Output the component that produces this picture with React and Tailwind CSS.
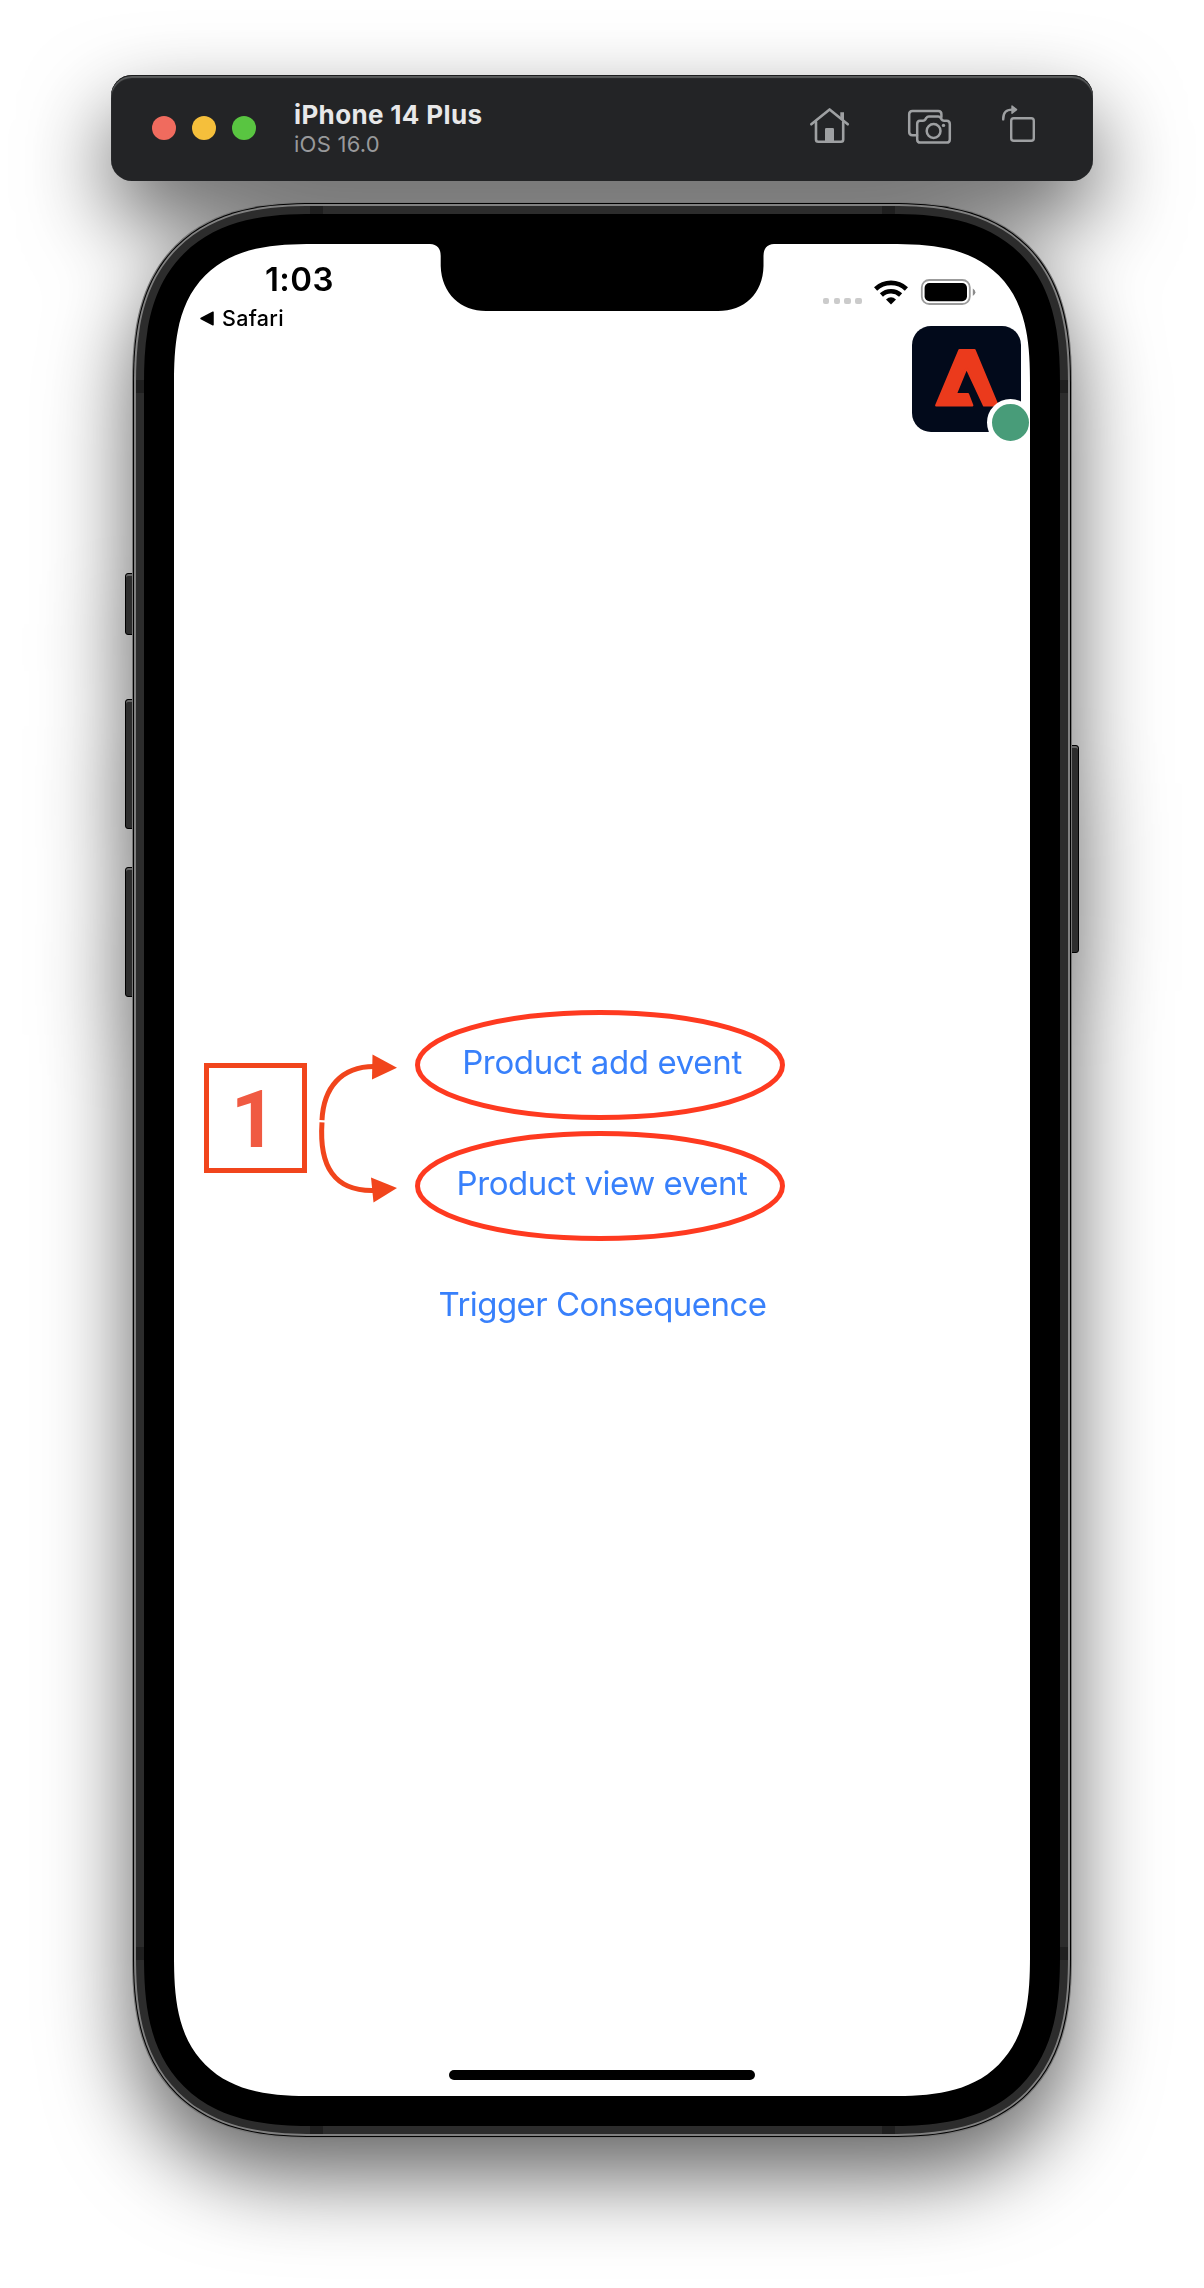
import React from "react";

function HomeIcon() {
  return (
    <svg className="mt-[30px] mr-[55px]" width="42" height="40" viewBox="809 105 42 40" fill="none" stroke="#9ea0a2" strokeWidth="2.6" strokeLinecap="round" strokeLinejoin="round">
      <path d="M811.3 124.3 L829.6 109.4 L847.8 124.3" />
      <path d="M816 122 V139.5 Q816 141.8 818.3 141.8 H841 Q843.2 141.8 843.2 139.5 V122" />
      <path d="M840.3 112.2 H844 V121 L840.3 118 Z" fill="#9ea0a2" stroke="none" />
      <path d="M825 129.3 Q825 128 826.3 128 H832.7 Q834 128 834 129.3 V142 H825 Z" fill="#9ea0a2" stroke="none" />
    </svg>
  );
}

function ScreenshotIcon() {
  return (
    <svg className="mt-[33px] mr-[48px]" width="46" height="38" viewBox="906 108 46 38" fill="none" stroke="#9ea0a2" strokeWidth="2.5" strokeLinecap="round" strokeLinejoin="round">
      <path d="M917 135.2 H912.5 Q909.2 135.2 909.2 132 V114.3 Q909.2 111 912.5 111 H938.3 Q941.4 111 941.4 114.3 V117" />
      <path d="M920 120.7 H923 Q924.6 120.7 925.3 119.5 L926.4 117.8 Q927.2 116.5 928.8 116.5 H938.2 Q939.8 116.5 940.6 117.8 L941.7 119.5 Q942.4 120.7 944 120.7 H946.6 Q949.8 120.7 949.8 124 V139.4 Q949.8 142.6 946.6 142.6 H920.4 Q917.2 142.6 917.2 139.4 V124 Q917.2 120.7 920 120.7 Z" />
      <circle cx="933.6" cy="131" r="6.9" />
      <circle cx="943.5" cy="125.4" r="1.7" fill="#9ea0a2" stroke="none" />
    </svg>
  );
}

function RotateIcon() {
  return (
    <svg className="mt-[28px]" width="36" height="42" viewBox="1000 103 36 42" fill="none" stroke="#9ea0a2" strokeWidth="2.4" strokeLinecap="round" strokeLinejoin="round">
      <rect x="1011.2" y="118.2" width="22.6" height="22.6" rx="2.6" />
      <path d="M1003.2 119.4 Q1003 109.6 1012 109.6" />
      <path d="M1012 106 L1016.6 109.6 L1012 113.2 Z" fill="#9ea0a2" strokeWidth="1.4" />
    </svg>
  );
}

function Toolbar() {
  return (
    <header className="relative flex h-[106px] w-[982px] items-center rounded-[21px] bg-[#232426] pl-[41px] shadow-[inset_0_1px_0_#1b1c1d,inset_0_3px_1px_#5a5c5d]">
      <div className="flex gap-4">
        <span className="size-6 rounded-full bg-[#f06b5e]" />
        <span className="size-6 rounded-full bg-[#f5bf3b]" />
        <span className="size-6 rounded-full bg-[#59c541]" />
      </div>
      <div className="ml-[38px] flex w-[300px] flex-col pb-px">
        <span className="h-[30px] text-[26px] leading-[30px] font-bold tracking-[0.35px] whitespace-nowrap text-[#e8e8e9]">iPhone 14 Plus</span>
        <span className="h-[26px] text-[22px] leading-[28px] tracking-[0.25px] whitespace-nowrap text-[#98999b]">iOS 16.0</span>
      </div>
      <div className="ml-auto flex items-start self-stretch pr-[57px]">
        <HomeIcon />
        <ScreenshotIcon />
        <RotateIcon />
      </div>
    </header>
  );
}

function Key({ className }) {
  return <span className={"absolute w-[12px] border border-black bg-[#2d2d2d] " + className} />;
}

function Notch() {
  return (
    <svg className="absolute top-0 left-[253px]" width="350" height="68" viewBox="0 0 350 68">
      <path d="M0 -1 V0 H3 Q13.7 0.5 13.7 12 V22 C14.5 50 34 67 59 67 H291 C317 67 336 50 336.5 22 V12 Q336.5 0.5 347 0 H350 V-1 Z" fill="#000" />
    </svg>
  );
}

function WifiIcon() {
  return (
    <svg width="34" height="25" viewBox="874 280 34 25" fill="none" stroke="#000" strokeWidth="4.6">
      <path d="M875.6 289 A22.5 22.5 0 0 1 906.4 289" />
      <path d="M881.4 295 A14.2 14.2 0 0 1 900.6 295" />
      <path d="M891 304.6 L886 299.5 Q891 295.2 896 299.5 Z" fill="#000" stroke="none" />
    </svg>
  );
}

function BatteryIcon() {
  return (
    <svg width="56" height="27" viewBox="920 279 56 27">
      <rect x="921.8" y="280" width="48" height="24" rx="7.5" fill="none" stroke="#9b9b9b" strokeWidth="1.8" />
      <rect x="924.6" y="283" width="42.4" height="18.2" rx="4.8" fill="#000" />
      <path d="M972.8 288.5 Q975.4 290 975.4 292.3 Q975.4 294.7 972.8 296 Z" fill="#8b8b8b" />
    </svg>
  );
}

function StatusBar() {
  return (
    <div className="flex h-[82px] justify-between pr-[54px] pl-[26px]">
      <div className="flex flex-col">
        <span className="mt-[14px] h-[42px] pl-[65px] text-[33px] leading-[42px] font-semibold tracking-[0.4px]">1:03</span>
        <span className="mt-[4px] flex h-[28px] items-center text-[21.5px] leading-[28px] font-medium tracking-[0.3px]">
          <svg className="mr-[8px]" width="14" height="15" viewBox="0 0 14 15">
            <path d="M1 7.5 L13 1.2 V13.8 Z" fill="#000" stroke="#000" strokeLinejoin="round" strokeWidth="1.5" />
          </svg>
          Safari
        </span>
      </div>
      <div className="mt-[35px] flex h-[27px] items-center">
        <div className="mt-[17px] mr-[12.5px] flex gap-[4.2px]">
          <span className="size-[6.5px] rounded-[2px] bg-[#cbcbcb]" />
          <span className="size-[6.5px] rounded-[2px] bg-[#cbcbcb]" />
          <span className="size-[6.5px] rounded-[2px] bg-[#cbcbcb]" />
          <span className="size-[6.5px] rounded-[2px] bg-[#cbcbcb]" />
        </div>
        <WifiIcon />
        <span className="w-[12px]" />
        <BatteryIcon />
      </div>
    </div>
  );
}

function AppBadge() {
  return (
    <div className="relative mr-[9.5px] h-[106px] w-[109px] self-end rounded-[19px] bg-[#020a1b]">
      <svg className="absolute top-[21px] left-[21px]" width="68" height="62" viewBox="933 347 68 62">
        <path d="M959.5 350 H974.5 L997.6 405.5 H984 L966.5 368 L955.8 394.2 H968 L972.3 405.5 H936.2 Z" fill="#eb3a1c" stroke="#eb3a1c" strokeWidth="2.2" strokeLinejoin="round" />
      </svg>
      <span className="absolute top-[73px] left-[75.5px] size-[47px] rounded-full border-[5.5px] border-white bg-[#489c79]" />
    </div>
  );
}

function Callout() {
  return (
    <>
      <div className="absolute top-[819px] left-[30px] flex h-[110px] w-[102.5px] items-center justify-center border-5 border-[#f1451c] pr-[3px] pt-[4px] font-['Roboto'] text-[80px] leading-none font-bold text-[#f05a42]">
        1
      </div>
      <svg className="absolute top-[806px] left-[136px]" width="94" height="160" viewBox="310 1050 94 160" fill="none" stroke="#f1451c" strokeWidth="5">
        <path d="M322 1120.2 C323.5 1088 341 1066.5 374 1066.5" />
        <path d="M322 1122.3 C319 1166 334 1191.5 374 1190.5" />
        <path d="M372.5 1054.5 L397 1067.8 L372 1079.5 Z" fill="#f1451c" stroke="none" />
        <path d="M371 1177.5 L397 1188 L373.5 1202.5 Z" fill="#f1451c" stroke="none" />
      </svg>
    </>
  );
}

function LinkButton({ children, circled, className }) {
  return (
    <button className={"relative flex h-[110px] w-[370px] items-center justify-center pb-[5px] text-[33px] leading-none whitespace-nowrap text-[#3880fb] " + className}>
      {circled && (
        <svg className="absolute inset-y-0 left-[-2px]" width="370" height="110" fill="none" stroke="#fe3a20" strokeWidth="5">
          <ellipse cx="185" cy="55" rx="182.5" ry="52.5" />
        </svg>
      )}
      {children}
    </button>
  );
}

function Screen() {
  return (
    <div className="relative flex h-[1852px] w-[856px] flex-col overflow-hidden rounded-[140px] bg-white text-black [corner-shape:superellipse(1.45)]">
      <Notch />
      <StatusBar />
      <AppBadge />
      <div className="mt-[578px] flex flex-col items-center gap-[11px]">
        <LinkButton circled className="tracking-[-0.35px]">Product add event</LinkButton>
        <LinkButton circled className="tracking-[-0.45px]">Product view event</LinkButton>
        <LinkButton className="pl-px tracking-[-0.55px]">Trigger Consequence</LinkButton>
      </div>
      <Callout />
      <div className="mt-auto mb-4 h-[10px] w-[306px] self-center rounded-full bg-black" />
    </div>
  );
}

function Phone() {
  return (
    <div className="relative mt-[22px]">
      <Key className="top-[370px] -left-[8px] h-[62px] rounded-l-[3px] shadow-[inset_0_2px_0_#666]" />
      <Key className="top-[496px] -left-[8px] h-[130px] rounded-l-[3px] shadow-[inset_0_2px_0_#666]" />
      <Key className="top-[664px] -left-[8px] h-[130px] rounded-l-[3px] shadow-[inset_0_2px_0_#666]" />
      <Key className="top-[542px] -right-[8px] h-[208px] rounded-r-[3px] shadow-[inset_0_2px_0_#666]" />
      <div className="relative rounded-[181px] bg-black p-px shadow-[0_0_0_1px_#777] [corner-shape:superellipse(1.35)]">
        <div className="rounded-[180px] bg-[#808080] p-[2px] [corner-shape:superellipse(1.35)]">
          <div className="relative overflow-hidden rounded-[178px] bg-[#2c2c2c] p-2 [corner-shape:superellipse(1.36)]">
            <span className="absolute inset-y-0 left-[174px] w-[13px] bg-[#1f1f1f]" />
            <span className="absolute inset-y-0 right-[173px] w-[13px] bg-[#1f1f1f]" />
            <span className="absolute inset-x-0 top-[174px] h-[13px] bg-[#1f1f1f]" />
            <span className="absolute inset-x-0 bottom-[174px] h-[13px] bg-[#1f1f1f]" />
            <div className="relative rounded-[170px] bg-black p-[30px] [corner-shape:superellipse(1.38)]">
              <Screen />
            </div>
          </div>
        </div>
      </div>
    </div>
  );
}

export default function App() {
  return (
    <main className="flex h-[2288px] w-[1204px] flex-col items-center overflow-hidden bg-white pt-[75px] font-['Inter',sans-serif]">
      <div className="flex flex-col items-center [filter:drop-shadow(0_38px_43px_rgba(0,0,0,0.61))]">
        <Toolbar />
        <Phone />
      </div>
    </main>
  );
}
